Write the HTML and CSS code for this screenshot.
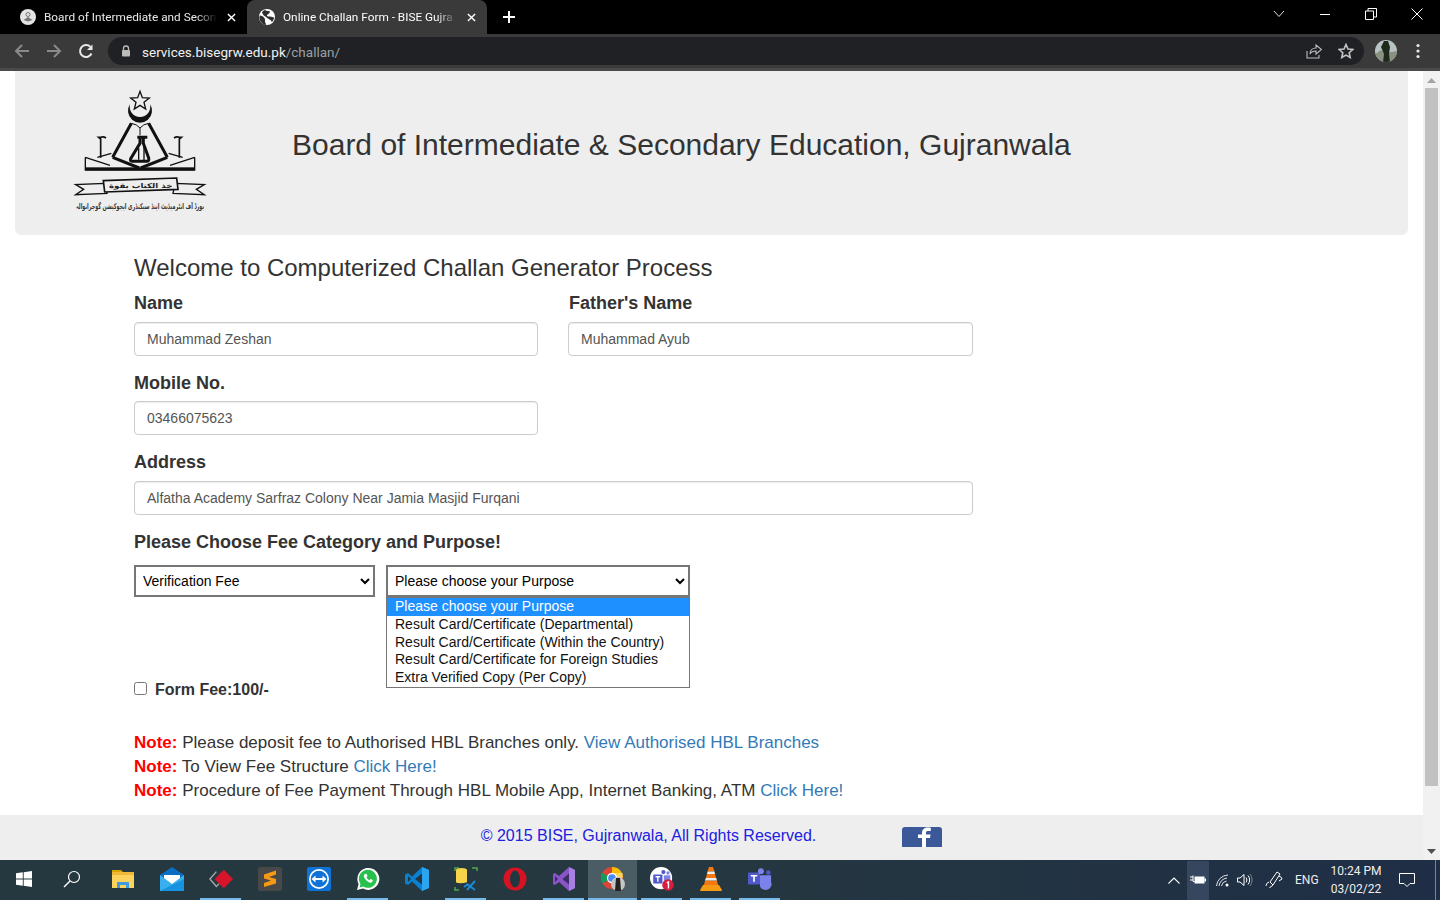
FILE: index.html
```html
<!DOCTYPE html>
<html lang="en">
<head>
<meta charset="utf-8">
<title>Online Challan Form - BISE Gujranwala</title>
<link rel="stylesheet" href="styles.css">
</head>
<body>
<div class="tabbar">
  <div class="tab">
    <svg class="favicon" viewBox="0 0 16 16"><circle cx="8" cy="8" r="8" fill="#e4e4e4"/><circle cx="8" cy="5.500" r="2" fill="none" stroke="#777" stroke-width="1"/><path d="M3.500 11l4.500-3 4.500 3-4.500 1.500z" fill="#777"/></svg>
    <span class="tab-title">Board of Intermediate and Secon</span>
    <svg class="tab-x" viewBox="0 0 10 10"><path d="M1 1l8 8M9 1l-8 8" stroke="#fff" stroke-width="1.6"/></svg>
  </div>
  <div class="tab tab-active">
    <svg class="favicon" viewBox="0 0 16 16"><circle cx="8" cy="8" r="8" fill="#fff"/><path d="M1 6.500c2 0 3 1 4 2s1 2 1 4c0 1 1 2 1 3l-1 .4C3 15 .5 12 .3 8zM6 1c1 1 3 1 4 1s1 1 .5 2-2 1-2.500 2 1 1.500 3 1.500 3 1 4 1c0 1-.5 3-2 4.500-1-1-1-2-2.500-2.500C9 9.500 7 8 5.500 7S3.500 4.500 3 3.500C3.800 2.200 5 1.300 6 1z" fill="#2f2f2f"/></svg>
    <span class="tab-title">Online Challan Form - BISE Gujra</span>
    <svg class="tab-x" viewBox="0 0 10 10"><path d="M1 1l8 8M9 1l-8 8" stroke="#fff" stroke-width="1.6"/></svg>
  </div>
  <svg class="newtab" viewBox="0 0 12 12"><path d="M6 0v12M0 6h12" stroke="#fff" stroke-width="2"/></svg>
  <div class="winctl">
    <svg class="wc wc-chev" viewBox="0 0 12 8"><path d="M1 1l5 5.500L11 1" fill="none" stroke="#ddd" stroke-width="1"/></svg>
    <svg class="wc" viewBox="0 0 12 12"><path d="M1 6.500h10" stroke="#fff" stroke-width="1"/></svg>
    <svg class="wc" viewBox="0 0 12 12"><path d="M.5 3h8v8.500h-8zM3 3V.5h8.500V9H8.500" fill="none" stroke="#fff" stroke-width="1"/></svg>
    <svg class="wc" viewBox="0 0 12 12"><path d="M.5.5l11 11M11.500.5l-11 11" stroke="#fff" stroke-width="1"/></svg>
  </div>
</div>

<div class="toolbar">
  <svg class="nav" viewBox="0 0 16 16"><path d="M15 8H2M8 2L2 8l6 6" fill="none" stroke="#8a8a8a" stroke-width="2"/></svg>
  <svg class="nav" viewBox="0 0 16 16"><path d="M1 8h13M8 2l6 6-6 6" fill="none" stroke="#8a8a8a" stroke-width="2"/></svg>
  <svg class="nav" viewBox="0 0 16 16"><path d="M13.500 10.500A6 6 0 1 1 12.300 3.800" fill="none" stroke="#e8e8e8" stroke-width="2"/><path d="M14.500 1.500v5.500H9z" fill="#e8e8e8"/></svg>
  <div class="omnibox">
    <svg class="lock" viewBox="0 0 10 12"><path d="M2.500 5V3.500a2.500 2.500 0 0 1 5 0V5" fill="none" stroke="#bbb" stroke-width="1.300"/><rect x="1" y="5" width="8" height="6.500" rx="1" fill="#bbb"/></svg>
    <span class="url"><span class="url-host">services.bisegrw.edu.pk</span>/challan/</span>
    <svg class="omni-ic" viewBox="0 0 16 16"><path d="M1 8v7h12v-3" fill="none" stroke="#bbb" stroke-width="1.100"/><path d="M4 11c0-4 3-6 6-6V2l5.500 4.500L10 11V8c-3 0-5 1-6 3z" fill="none" stroke="#bbb" stroke-width="1.100"/></svg>
    <svg class="omni-ic" viewBox="0 0 16 16"><path d="M8 1.500l2 4.500 4.800.5-3.600 3.200 1 4.800L8 12.100l-4.200 2.400 1-4.800L1.200 6.500 6 6z" fill="none" stroke="#c4c4c4" stroke-width="1.600"/></svg>
  </div>
  <svg class="avatar" viewBox="0 0 22 22"><defs><clipPath id="av"><circle cx="11" cy="11" r="11"/></clipPath></defs><g clip-path="url(#av)"><rect width="22" height="22" fill="#b9c3c4"/><path d="M0 14l6-4 5 3 11-2v11H0z" fill="#8b9180"/><path d="M9 1h4l2 6-1 7 1 8H8l1-8-3-7z" fill="#1f2a1c"/></g></svg>
  <svg class="kebab" viewBox="0 0 4 16"><circle cx="2" cy="2.500" r="1.600" fill="#e8e8e8"/><circle cx="2" cy="8" r="1.600" fill="#e8e8e8"/><circle cx="2" cy="13.500" r="1.600" fill="#e8e8e8"/></svg>
</div>

<div class="viewport">
  <div class="page">
    <header class="banner">
      <svg class="logo" viewBox="0 0 480 420" role="img" aria-label="BISE Gujranwala crest">
        <path d="M240 34l7 19 21 1-16 13 5 20-17-11-17 11 5-20-16-13 21-1z" fill="#eee" stroke="#111" stroke-width="4"/>
        <path d="M210 72A36 36 0 1 0 270 72A31 31 0 1 1 210 72z" fill="#111"/>
        <path d="M214 130L158 232M266 130l56 102" stroke="#111" stroke-width="9" fill="none"/>
        <path d="M214 130q16 2 26 14q10-12 26-14M240 144v22" stroke="#111" stroke-width="3" fill="none"/>
        <path d="M158 232l80 32M322 232l-80 32" stroke="#111" stroke-width="9" fill="none"/>
        <path d="M232 172h30M240 172v18l-28 46q-3 8 6 8h42q8 0 6-10l-16-44v-18" fill="none" stroke="#111" stroke-width="9"/>
        <path d="M236 205v34M252 200v40" stroke="#111" stroke-width="4"/>
        <path d="M138 174q-8-6-16-2l-6 0 6 5v56" fill="none" stroke="#111" stroke-width="5"/>
        <path d="M342 174q8-6 16-2l6 0-6 5v56" fill="none" stroke="#111" stroke-width="5"/>
        <path d="M76 232l74 24M404 232l-74 24M76 232v38h328v-38M112 232l42-12M368 232l-42-12" fill="none" stroke="#111" stroke-width="4"/>
        <rect x="76" y="262" width="328" height="9" fill="#111"/>
        <path d="M135 310l-88 4 24 14-24 16 94-4-6-28M345 310l88 4-24 14 24 16-94-4 6-28" fill="#eee" stroke="#111" stroke-width="4"/>
        <path d="M130 302l220-8 4 34-220 8z" fill="#eee" stroke="#111" stroke-width="5"/>
        <text class="logo-motto" x="242" y="324" text-anchor="middle" textLength="190" lengthAdjust="spacingAndGlyphs">خذ الکتاب بقوة</text>
        <text class="logo-urdu" x="240" y="388" text-anchor="middle" textLength="385" lengthAdjust="spacingAndGlyphs">بورڈ آف انٹرمیڈیٹ اینڈ سیکنڈری ایجوکیشن گوجرانوالہ</text>
      </svg>
      <h1 class="site-title">Board of Intermediate &amp; Secondary Education, Gujranwala</h1>
    </header>

    <main class="content">
      <h2 class="welcome">Welcome to Computerized Challan Generator Process</h2>
      <form class="form-grid">
        <div class="field">
          <label class="label">Name</label>
          <input class="control" type="text" value="Muhammad Zeshan">
        </div>
        <div class="field">
          <label class="label label-father">Father's Name</label>
          <input class="control" type="text" value="Muhammad Ayub">
        </div>
        <div class="field">
          <label class="label">Mobile No.</label>
          <input class="control" type="text" value="03466075623">
        </div>
        <div class="field field-empty"></div>
        <div class="field field-wide">
          <label class="label">Address</label>
          <input class="control" type="text" value="Alfatha Academy Sarfraz Colony Near Jamia Masjid Furqani">
        </div>
      </form>

      <div class="label label-section">Please Choose Fee Category and Purpose!</div>
      <div class="selects">
        <select class="sel sel-cat"><option>Verification Fee</option></select>
        <div class="sel-wrap">
          <select class="sel sel-purpose"><option>Please choose your Purpose</option></select>
          <ul class="popup">
            <li class="popup-on">Please choose your Purpose</li>
            <li>Result Card/Certificate (Departmental)</li>
            <li>Result Card/Certificate (Within the Country)</li>
            <li>Result Card/Certificate for Foreign Studies</li>
            <li>Extra Verified Copy (Per Copy)</li>
          </ul>
        </div>
      </div>

      <label class="fee"><input class="fee-check" type="checkbox"><span>Form Fee:100/-</span></label>

      <div class="notes">
        <p><b class="note">Note:</b> Please deposit fee to Authorised HBL Branches only. <a class="link" href="#">View Authorised HBL Branches</a></p>
        <p><b class="note">Note:</b> To View Fee Structure <a class="link" href="#">Click Here!</a></p>
        <p><b class="note">Note:</b> Procedure of Fee Payment Through HBL Mobile App, Internet Banking, ATM <a class="link" href="#">Click Here!</a></p>
      </div>
    </main>

    <footer class="footer">
      <span class="copy">© 2015 BISE, Gujranwala, All Rights Reserved.</span>
      <svg class="fb" viewBox="0 0 40 20"><path d="M3 0h34q3 0 3 3v17H0V3q0-3 3-3z" fill="#3b5998"/><path d="M24 20v-9h4l.5-3.500H24V6c0-1.500.8-2 2-2h2.800V.8C28 .7 27 .6 25.800.6 22.500.6 20 2.500 20 6v1.500h-4V11h4v9z" fill="#fff"/></svg>
    </footer>
  </div>
  <div class="scrollbar">
    <svg class="sb-arrow" viewBox="0 0 9 5"><path d="M4.500 0L9 5H0z" fill="#a3a3a3"/></svg>
    <div class="sb-thumb"></div>
    <svg class="sb-arrow" viewBox="0 0 9 5"><path d="M0 0h9L4.500 5z" fill="#505050"/></svg>
  </div>
</div>

<div class="taskbar">
  <div class="task-apps">
    <div class="app"><svg viewBox="0 0 16 16"><path d="M0 2.300l6.800-1v6.300H0zM7.700 1.200L16 0v7.600H7.700zM0 8.400h6.800v6.300L0 13.700zM7.700 8.400H16V16l-8.300-1.200z" fill="#fff"/></svg></div>
    <div class="app"><svg viewBox="0 0 18 18"><circle cx="11" cy="7" r="5.500" fill="none" stroke="#fff" stroke-width="1.200"/><path d="M7 11l-6 6" stroke="#fff" stroke-width="1.400"/></svg></div>
    <div class="app"><svg viewBox="0 0 24 24"><path d="M1 3h9l2 2h-11z" fill="#d9a400"/><rect x="1" y="5" width="22" height="16" fill="#fcd35c"/><rect x="1" y="5" width="22" height="3" fill="#f0b93a"/><path d="M6 21v-6h12v6h-3v-3H9v3z" fill="#3f9be0"/></svg></div>
    <div class="app"><svg viewBox="0 0 24 24"><path d="M0 8L12 0l12 8v16H0z" fill="#0a6fc2"/><path d="M4 8h16v6l-8 4-8-4z" fill="#fff"/><path d="M0 8l12 9 12-9v16H0z" fill="#38b0f0"/><path d="M0 24l24-12v12z" fill="#1893e0"/></svg></div>
    <div class="app app-on2"><svg viewBox="0 0 26 24"><path d="M8 4L1 12l7 8 3-3" fill="none" stroke="#a8a8a8" stroke-width="1.500"/><path d="M16 2l10 10-10 10L6 12z" fill="#d8142a"/></svg></div>
    <div class="app"><svg viewBox="0 0 24 24"><rect width="24" height="24" rx="2" fill="#484848"/><path d="M6 9.500L18 5.500v4L11 12l7 2v4.500L6 22v-4l7-2.500-7-2z" fill="#f59a12" transform="translate(0 -2)"/></svg></div>
    <div class="app"><svg viewBox="0 0 24 24"><rect width="24" height="24" rx="2" fill="#0e72d6"/><circle cx="12" cy="12" r="10" fill="#fff"/><circle cx="12" cy="12" r="8.300" fill="#0e72d6"/><path d="M4.500 12l4-3.500V11h7V8.500l4 3.500-4 3.500V13h-7v2.500z" fill="#fff"/></svg></div>
    <div class="app app-on"><svg viewBox="0 0 24 24"><path d="M1 23l1.600-6A11 11 0 1 1 7 21.500z" fill="#fff"/><path d="M3.500 20.500l1-3.600A9 9 0 1 1 7.300 19.500z" fill="#26c04b"/><path d="M9 7c-1 .5-1.500 1.700-1 3 1 2.500 3 4.500 5.500 5.500 1.500.5 2.500 0 3-1l.3-1.500-2.300-1-1 1.200c-1.200-.5-2.500-1.700-3-3l1-1.200-1-2.300z" fill="#fff"/></svg></div>
    <div class="app"><svg viewBox="0 0 24 24"><path d="M17 0l7 3v18l-7 3L7 14.500 3 18l-3-1.500v-9L3 6l4 3.500z" fill="#0b7fd0"/><path d="M17 0l7 3v18l-7 3z" fill="#2ba5ef"/><path d="M17 6.500L10 12l7 5.500z" fill="#233741"/><path d="M3 9v6l3-3z" fill="#233741"/></svg></div>
    <div class="app app-on"><svg viewBox="0 0 24 24"><path d="M1 4V1h4M1 20v3h4M18 1h5v3" fill="none" stroke="#4fa84a" stroke-width="1.500"/><ellipse cx="7.500" cy="3" rx="5.500" ry="2" fill="#f7d44a"/><path d="M2 3h11v12c0 1-11 2-11 0z" fill="#f7d44a"/><path d="M13 17l8 6M21 14l-8 9M10 20l4-3" stroke="#1b8ad6" stroke-width="2"/></svg></div>
    <div class="app"><svg viewBox="0 0 24 24"><circle cx="12" cy="12" r="11.500" fill="#d61322"/><ellipse cx="12" cy="12" rx="5" ry="8.500" fill="#233741"/></svg></div>
    <div class="app app-on"><svg viewBox="0 0 24 24"><path d="M17 0l6 3v18l-6 3L7 15l-4 3-2-1V7l2-1 4 3z" fill="#8a53c8"/><path d="M17 0l6 3v18l-6 3z" fill="#a77fe0"/><path d="M17 6.500L10.500 12l6.500 5.500z" fill="#3b2c66"/><path d="M3 9v6l3-3z" fill="#3b2c66"/></svg></div>
    <div class="app app-active app-on"><svg viewBox="0 0 24 24"><circle cx="11" cy="11" r="11" fill="#db4437"/><path d="M11 11L1.500 16.500A11 11 0 0 1 1 6z" fill="#0f9d58"/><path d="M11 0a11 11 0 0 1 10 6H11z" fill="#fbbc05"/><path d="M11 6h10.500l.5 4-6 8z" fill="#fcd35c"/><circle cx="11" cy="11" r="4.500" fill="#4a8af4" stroke="#fff" stroke-width="1.300"/><circle cx="17" cy="17" r="7" fill="#c7c7c2"/><path d="M15 11h4l.5 6 .5 7h-6l.5-7z" fill="#222"/></svg></div>
    <div class="app app-on2"><svg viewBox="0 0 26 26"><circle cx="12" cy="12" r="12" fill="#fff"/><rect x="3.500" y="8" width="10" height="10" rx="1" fill="#5059c9"/><path d="M6 10.500h5M8.500 10.500V16" stroke="#fff" stroke-width="1.500"/><circle cx="14.500" cy="5.500" r="2.300" fill="#5059c9"/><circle cx="19.500" cy="6.500" r="1.800" fill="#7b83eb"/><path d="M15 9h7v6h-7z" fill="#7b83eb"/><circle cx="19.500" cy="19.500" r="6.300" fill="#d81e3c"/><path d="M18.200 17.200l1.800-1v7" fill="none" stroke="#fff" stroke-width="1.500"/></svg></div>
    <div class="app app-on"><svg viewBox="0 0 22 24"><path d="M9 0h4l1.500 4.500h-7zM7 7h8l1.200 4H5.800zM5 13.500h12l1 4.500H4z" fill="#f5770f"/><path d="M7.500 4.500h7L15 7H7zM5.800 11h10.400l.8 2.500H5z" fill="#eee"/><path d="M3 18h16l3 5q0 1-1 1H1q-1 0-1-1z" fill="#f59a12"/></svg></div>
    <div class="app app-on"><svg viewBox="0 0 26 24"><rect x="0" y="5" width="13" height="13" rx="1" fill="#5059c9"/><path d="M3 8.500h7M6.500 8.500V15" stroke="#fff" stroke-width="1.800"/><circle cx="14" cy="3.500" r="3.200" fill="#7b83eb"/><circle cx="22" cy="5" r="2.500" fill="#5059c9"/><path d="M13 8h12v7a6 6 0 0 1-12 5z" fill="#7b83eb"/></svg></div>
  </div>
  <div class="tray">
    <svg class="tr tr-chev" viewBox="0 0 12 7"><path d="M.5 6.500L6 1l5.500 5.500" fill="none" stroke="#fff" stroke-width="1.100"/></svg>
    <div class="tr-batt"><svg viewBox="0 0 16 10"><path d="M0 2h3M0 5h3M3 .500v6h1.500" fill="none" stroke="#fff" stroke-width="1"/><rect x="4.500" y="1.500" width="10" height="7" fill="#fff"/><rect x="14.500" y="3.500" width="1.500" height="3" fill="#fff"/></svg></div>
    <svg class="tr tr-wifi" viewBox="0 0 14 14"><path d="M.5 13A12 12 0 0 1 12 2M3 13A9 9 0 0 1 11 5M5.500 13A6 6 0 0 1 10.500 8" fill="none" stroke="#dfe3e8" stroke-width="1"/><circle cx="11" cy="12" r="1.500" fill="#fff"/></svg>
    <svg class="tr tr-vol" viewBox="0 0 16 14"><path d="M.5 5h2.500L7 1.500v11L3 9H.5z" fill="none" stroke="#fff" stroke-width="1"/><path d="M9 4.500a4 4 0 0 1 0 5M11 2.500a7 7 0 0 1 0 9" fill="none" stroke="#fff" stroke-width="1"/><path d="M13 1a9.500 9.500 0 0 1 0 12" fill="none" stroke="#7a8594" stroke-width="1"/></svg>
    <svg class="tr tr-pen" viewBox="0 0 18 18"><path d="M12 1l3 2-7 11c-1 1.500-3 1.500-3.500 3M12 1L5 11l3 3M14 5q3 1 3 3l-3 2" fill="none" stroke="#fff" stroke-width="1"/><path d="M4 11q-3 1-3 4" fill="none" stroke="#fff" stroke-width="1"/></svg>
    <span class="tr-lang">ENG</span>
    <div class="tr-clock"><span>10:24 PM</span><span>03/02/22</span></div>
    <svg class="tr tr-msg" viewBox="0 0 16 14"><path d="M.5.500h15v10h-4.500l-3 3-3-3H.5z" fill="none" stroke="#fff" stroke-width="1"/></svg>
    <div class="tr-desk"></div>
  </div>
</div>
</body>
</html>
```

FILE: styles.css
```css
* { box-sizing: border-box; }
html, body { margin: 0; padding: 0; }
body {
  width: 1440px;
  height: 900px;
  overflow: hidden;
  display: flex;
  flex-direction: column;
  font-family: "Liberation Sans", Arial, sans-serif;
  color: #333;
  background: #fff;
}

/* browser tab strip */
.tabbar {
  height: 34px;
  flex: none;
  background: #000;
  display: flex;
  align-items: flex-end;
  padding-left: 8px;
}
.tab {
  width: 239px;
  height: 34px;
  display: flex;
  align-items: center;
  padding: 0 8px 0 12px;
  color: #e8e8e8;
  font: 11.8px Roboto, sans-serif;
}
.tab-active {
  width: 240px;
  background: #3a3a3a;
  border-radius: 8px 8px 0 0;
  color: #fff;
}
.favicon { width: 16px; height: 16px; flex: none; margin-right: 8px; }
.tab-title {
  flex: 1;
  white-space: nowrap;
  overflow: hidden;
  -webkit-mask-image: linear-gradient(90deg, #000 88%, transparent 100%);
  mask-image: linear-gradient(90deg, #000 88%, transparent 100%);
}
.tab-x { width: 9px; height: 9px; flex: none; margin: 0 3px 0 10px; }
.newtab { width: 12px; height: 12px; flex: none; margin: 0 0 11px 16px; }
.winctl { margin-left: auto; display: flex; align-self: flex-start; height: 28px; align-items: center; padding-right: 17px; }
.wc { width: 12px; height: 12px; margin-left: 34px; flex: none; }
.wc-chev { height: 8px; margin-left: 0; }

/* address bar row */
.toolbar {
  height: 37px;
  flex: none;
  background: #3a3a3a;
  border-bottom: 3px solid #4a4a4a;
  display: flex;
  align-items: center;
  padding-left: 14px;
}
.nav { width: 16px; height: 16px; flex: none; margin-right: 16px; }
.omnibox {
  width: 1256px;
  height: 28px;
  margin-left: -2px;
  border-radius: 14px;
  background: #202124;
  display: flex;
  align-items: center;
  padding: 0 10px 0 13px;
}
.lock { width: 10px; height: 12px; flex: none; margin-right: 11px; }
.url { flex: 1; font: 13.5px Roboto, sans-serif; color: #9aa0a6; margin-top: 2px; }
.url-host { color: #f1f1f1; }
.omni-ic { width: 16px; height: 16px; flex: none; margin-left: 16px; }
.avatar { width: 22px; height: 22px; flex: none; margin-left: 11px; }
.kebab { width: 4px; height: 16px; flex: none; margin-left: 19px; }

/* page viewport */
.viewport { flex: 1; min-height: 0; display: flex; }
.page { width: 1423px; flex: none; display: flex; flex-direction: column; }
.banner {
  height: 164px;
  flex: none;
  margin: 0 15px;
  background: #eee;
  border-radius: 0 0 6px 6px;
  display: flex;
  align-items: flex-start;
  padding: 9px 0 0 45px;
}
.logo { width: 160px; height: 140px; flex: none; overflow: visible; }
.logo-motto { font: 700 20px "DejaVu Sans", sans-serif; fill: #222; }
.logo-urdu { font: 700 24px "DejaVu Sans", sans-serif; fill: #333; }
.site-title {
  margin: 47px 0 0 72px;
  font-size: 30px;
  line-height: 36px;
  font-weight: 400;
  white-space: nowrap;
}

.content { flex: 1; padding: 20px 0 0 134px; width: 973px; }
.welcome {
  margin: 0 0 12.4px;
  font-size: 24px;
  line-height: 26px;
  font-weight: 400;
  white-space: nowrap;
}
.form-grid { display: grid; grid-template-columns: 404px 405px; column-gap: 30px; row-gap: 17px; }
.field-wide { grid-column: 1 / 3; }
.label {
  display: block;
  font-size: 18px;
  line-height: 20px;
  font-weight: 700;
  margin-bottom: 8.5px;
}
.label-father { margin-left: 1px; }
.label-section { margin: 17px 0 13px; white-space: nowrap; }
.control {
  display: block;
  width: 100%;
  height: 34px;
  padding: 6px 12px;
  border: 1px solid #ccc;
  border-radius: 4px;
  font: 14px "Liberation Sans", Arial, sans-serif;
  color: #555;
  background: #fff;
  box-shadow: inset 0 1px 1px rgba(0, 0, 0, .075);
}

.selects { display: flex; gap: 11px; align-items: flex-start; }
.sel-wrap { position: relative; }
.sel {
  display: block;
  height: 32px;
  border: 2px solid #767676;
  background: #fff;
  font: 14px "Liberation Sans", Arial, sans-serif;
  color: #000;
  padding-left: 3px;
  border-radius: 0;
}
.sel-cat { width: 241px; }
.sel-purpose { width: 304px; }
.popup {
  position: absolute;
  left: 0;
  top: 32px;
  width: 304px;
  height: 91px;
  margin: 0;
  padding: .5px 0 0;
  list-style: none;
  background: #fff;
  border: 1px solid #767676;
  font-size: 14px;
  line-height: 17.6px;
  color: #111;
}
.popup li { padding-left: 8px; height: 17.6px; white-space: nowrap; }
.popup .popup-on { background: #1e90ff; color: #fff; }

.fee {
  display: flex;
  align-items: center;
  margin-top: 83px;
  height: 20px;
  font-size: 16px;
  font-weight: 700;
}
.fee-check { width: 13px; height: 13px; margin: 0 8px 2px 0; }
.notes { margin-top: 31px; font-size: 17px; line-height: 24px; white-space: nowrap; }
.notes p { margin: 0; }
.note { color: #f00; }
.link { color: #337ab7; text-decoration: none; }

.footer {
  height: 45px;
  flex: none;
  background: #eee;
  display: flex;
  justify-content: center;
  align-items: center;
  gap: 86px;
  padding-bottom: 4px;
}
.copy { font-size: 16px; color: #2020e0; }
.fb { width: 40px; height: 20px; flex: none; margin-top: 2px; }

/* scrollbar */
.scrollbar {
  width: 17px;
  flex: none;
  background: #f1f1f1;
  display: flex;
  flex-direction: column;
  align-items: center;
  padding: 7px 0 6px;
}
.sb-arrow { width: 9px; height: 5px; flex: none; }
.sb-thumb { width: 13px; height: 698px; background: #c1c1c1; margin: 5px 0 auto; }

/* windows taskbar */
.taskbar {
  height: 40px;
  flex: none;
  display: flex;
  background: linear-gradient(90deg, #26383f 0%, #253740 50%, #1f2e46 100%);
  color: #fff;
}
.task-apps { display: flex; }
.app {
  width: 49px;
  height: 40px;
  display: flex;
  align-items: center;
  justify-content: center;
  border-bottom: 2px solid transparent;
  flex: none;
}
.app svg { width: 24px; height: 24px; display: block; }
.app:first-child svg { width: 16px; height: 16px; margin-right: 1px; }
.app:nth-child(2) svg { width: 18px; height: 18px; margin-right: 3px; }
.app-on, .app-on2 { position: relative; }
.app-on::after, .app-on2::after {
  content: "";
  position: absolute;
  left: 4px;
  width: 41px;
  bottom: -2px;
  height: 2px;
  background: #76b9ed;
}
.app-active { background: #4a5d64; }
.app-active::after { left: 0; width: 49px; }
.tray { margin-left: auto; display: flex; align-items: center; height: 40px; }
.tr { flex: none; }
.tr-chev { width: 12px; height: 7px; margin-right: 7px; }
.tr-batt {
  width: 22px;
  height: 39px;
  background: #35465e;
  display: flex;
  align-items: center;
  justify-content: center;
}
.tr-batt svg { width: 16px; height: 10px; }
.tr-wifi { width: 14px; height: 14px; margin-left: 7px; }
.tr-vol { width: 16px; height: 14px; margin-left: 7px; }
.tr-pen { width: 18px; height: 18px; margin-left: 12px; }
.tr-lang { font: 12px Roboto, sans-serif; margin-left: 12px; width: 28px; color: #eee; }
.tr-clock {
  display: flex;
  flex-direction: column;
  align-items: center;
  font: 12px/18px Roboto, sans-serif;
  color: #eee;
  width: 60px;
  margin-left: 3px;
}
.tr-msg { width: 16px; height: 14px; margin-left: 13px; }
.tr-desk { width: 1px; height: 40px; background: #7a8594; margin: 0 4px 0 20px; }
```
